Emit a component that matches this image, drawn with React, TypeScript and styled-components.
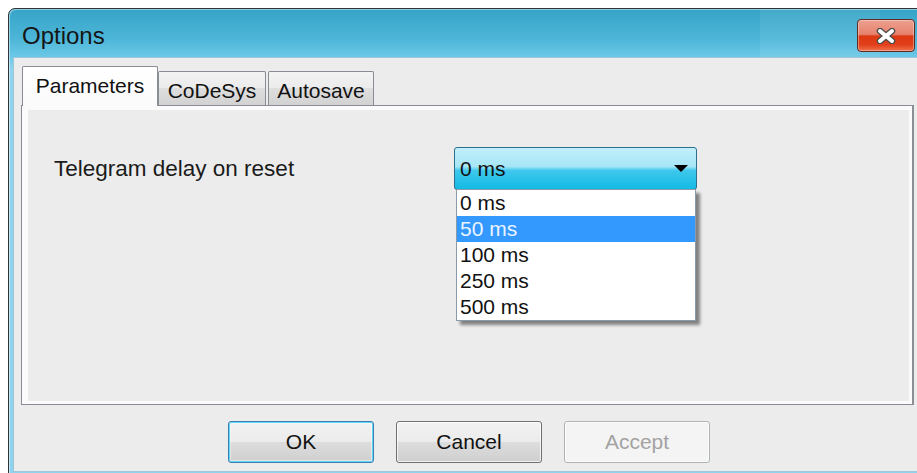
import React from "react";
import styled, { createGlobalStyle } from "styled-components";

const GlobalStyle = createGlobalStyle`
  html, body {
    margin: 0;
    padding: 0;
    background: #ffffff;
    overflow: hidden;
  }
  body {
    font-family: "Liberation Sans", Arial, sans-serif;
  }
  * {
    box-sizing: border-box;
  }
`;

const delays = ["0 ms", "50 ms", "100 ms", "250 ms", "500 ms"];

const App = () => {
  return (
    <>
      <GlobalStyle />
      <Screen>
        <Window>
          <TitleBar>
            <Title>Options</Title>
            <CloseButton>
              <svg width="22" height="16" viewBox="0 0 22 16">
                <path d="M5 3 L17 13 M17 3 L5 13" stroke="#4b4b4b" strokeWidth="6.5" strokeLinecap="round" fill="none" />
                <path d="M5 3 L17 13 M17 3 L5 13" stroke="#ffffff" strokeWidth="4" strokeLinecap="round" fill="none" />
              </svg>
            </CloseButton>
          </TitleBar>
          <Client>
            <Tabs>
              <Tab $active $w={136}>Parameters</Tab>
              <Tab $w={108}>CoDeSys</Tab>
              <Tab $w={106} $gap={2}>Autosave</Tab>
            </Tabs>
            <Panel>
              <PanelInner>
                <Row>
                  <Label>Telegram delay on reset</Label>
                  <Combo>
                    <ComboValue>0 ms</ComboValue>
                    <svg width="14" height="8" viewBox="0 0 14 8">
                      <path d="M0 0 H14 L7 7 Z" fill="#000" />
                    </svg>
                    <List>
                      {delays.map((d) => (
                        <Item key={d} $selected={d === "50 ms"}>
                          {d}
                        </Item>
                      ))}
                    </List>
                  </Combo>
                </Row>
              </PanelInner>
            </Panel>
            <ButtonRow>
              <Button $kind="default">OK</Button>
              <Button>Cancel</Button>
              <Button $kind="disabled">Accept</Button>
            </ButtonRow>
          </Client>
        </Window>
      </Screen>
    </>
  );
};
export default App;

const Screen = styled.div`
  width: 960px;
  height: 473px;
  padding: 8px 0 0 8px;
  overflow: hidden;
`;

const Window = styled.div`
  width: 919px;
  height: 480px;
  border: 1px solid #2f3538;
  border-radius: 7px 7px 0 0;
  background: linear-gradient(#36a4c7 0px, #4db6d8 30px, #6cc8e7 48px, #8fd4ee 60px, #8fd4ee);
  padding: 0 4px;
  display: flex;
  flex-direction: column;
  box-shadow: inset 1px 1px 0 rgba(255, 255, 255, 0.45);
`;

const TitleBar = styled.div`
  height: 48px;
  display: flex;
  justify-content: space-between;
  align-items: flex-start;
  padding: 0 7px 0 9px;
  position: relative;

  &::before {
    content: "";
    position: absolute;
    left: 747px;
    top: 0;
    width: 120px;
    height: 100%;
    background: rgba(255, 255, 255, 0.07);
  }
`;

const Title = styled.div`
  font-size: 24px;
  line-height: 24px;
  color: #151515;
  margin-top: 15px;
  position: relative;
`;

const CloseButton = styled.div`
  width: 58px;
  height: 33px;
  margin-top: 10px;
  border: 1px solid #5e2a22;
  border-radius: 4px;
  background: linear-gradient(#eda08f 0%, #e6826d 46%, #dc3812 52%, #e2401b 80%, #f0704c 100%);
  box-shadow: inset 0 0 0 1px rgba(255, 255, 255, 0.35);
  display: flex;
  align-items: center;
  justify-content: center;
  position: relative;
`;

const Client = styled.div`
  height: 415px;
  background: #ececec;
  border: 1px solid #9fc6d8;
  padding: 8px 7px 0;
  display: flex;
  flex-direction: column;
`;

const Tabs = styled.div`
  height: 39px;
  display: flex;
  align-items: flex-end;
  padding-left: 1px;
  position: relative;
  z-index: 2;
`;

const Tab = styled.div<{ $active?: boolean; $w: number; $gap?: number }>`
  width: ${(p) => p.$w}px;
  height: ${(p) => (p.$active ? 40 : 34)}px;
  margin-bottom: ${(p) => (p.$active ? -1 : 0)}px;
  margin-left: ${(p) => p.$gap ?? 0}px;
  border: 1px solid #898c95;
  border-bottom: none;
  border-radius: 2px 2px 0 0;
  background: ${(p) =>
    p.$active
      ? "linear-gradient(#ffffff, #fbfbfb)"
      : "linear-gradient(#f3f3f3, #ebebeb 50%, #dedede 50%, #d2d2d2)"};
  font-size: 21px;
  line-height: 21px;
  padding-top: 8px;
  text-align: center;
  color: #111;
`;

const Panel = styled.div`
  width: 893px;
  height: 300px;
  border: 1px solid #898c95;
  border-right: 2px solid #8c9096;
  background: #fbfbfb;
  padding: 4px 3px 3px 6px;
  position: relative;
  z-index: 1;
`;

const PanelInner = styled.div`
  height: 100%;
  background: #ececec;
`;

const Row = styled.div`
  display: flex;
  align-items: center;
  padding: 37px 0 0 26px;
`;

const Label = styled.div`
  width: 400px;
  font-size: 22.5px;
  line-height: 22px;
  color: #1b1b1b;
`;

const Combo = styled.div`
  width: 243px;
  height: 43px;
  border: 1px solid #2d6f8c;
  border-radius: 3px;
  background: linear-gradient(#c2effb 0%, #a6e6f7 45%, #3fc7ec 55%, #13bbe4 100%);
  display: flex;
  align-items: center;
  justify-content: space-between;
  padding: 0 8px 0 5px;
  position: relative;
`;

const ComboValue = styled.span`
  font-size: 21px;
  color: #111;
`;

const List = styled.div`
  position: absolute;
  top: 100%;
  left: 1px;
  width: 240px;
  border: 1px solid #8a9aa8;
  background: #ffffff;
  box-shadow: 4px 4px 3px rgba(0, 0, 0, 0.45);
  z-index: 5;
`;

const Item = styled.div<{ $selected?: boolean }>`
  height: 26px;
  line-height: 26px;
  padding-left: 3px;
  font-size: 21px;
  color: ${(p) => (p.$selected ? "#eaf4ff" : "#111111")};
  background: ${(p) => (p.$selected ? "#3399ff" : "transparent")};
`;

const ButtonRow = styled.div`
  display: flex;
  gap: 22px;
  padding-left: 207px;
  margin-top: 16px;
`;

const Button = styled.div<{ $kind?: "default" | "disabled" }>`
  width: 146px;
  height: 42px;
  border-radius: 3px;
  display: flex;
  align-items: center;
  justify-content: center;
  font-size: 21px;
  border: 1px solid
    ${(p) => (p.$kind === "default" ? "#3c7fb1" : p.$kind === "disabled" ? "#adb2b5" : "#707070")};
  color: ${(p) => (p.$kind === "disabled" ? "#a3a3a3" : "#111")};
  background: ${(p) =>
    p.$kind === "disabled"
      ? "#f4f4f4"
      : "linear-gradient(#f2f2f2, #ebebeb 50%, #dddddd 50%, #cfcfcf)"};
  box-shadow: ${(p) =>
    p.$kind === "default"
      ? "inset 0 0 0 1px #5fd6f8, inset 0 0 0 2px rgba(255,255,255,0.4)"
      : "inset 0 0 0 1px rgba(255,255,255,0.7)"};
`;
